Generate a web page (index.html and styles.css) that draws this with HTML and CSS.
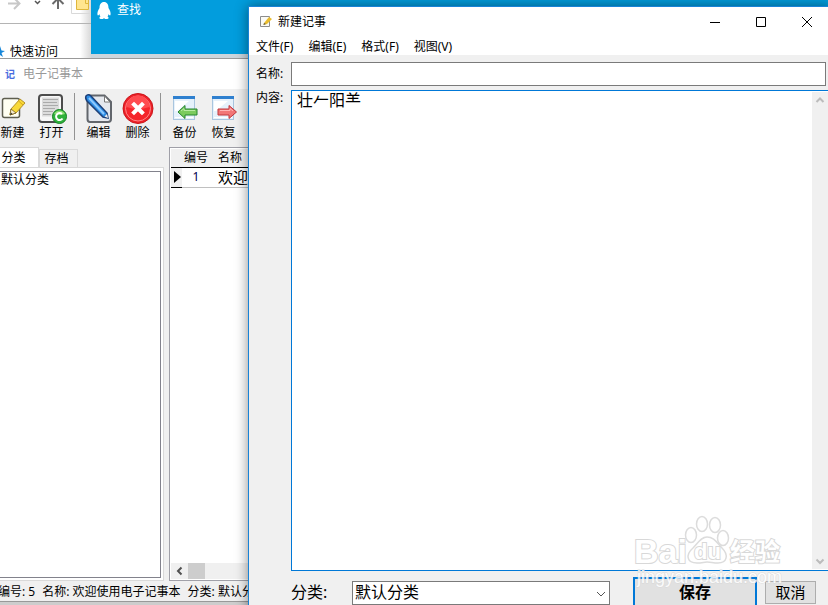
FILE: index.html
```html
<!DOCTYPE html>
<html lang="zh-CN">
<head>
<meta charset="utf-8">
<title>新建记事</title>
<link rel="stylesheet" href="styles.css">
</head>
<body>
<div class="desktop">
  <section class="explorer">
    <div class="explorer-nav">
      <svg width="90" height="23" viewBox="0 0 90 23" fill="none">
        <path d="M8 3.500H19M14 -2L19.500 3.500L14 9" stroke="#c8c8c8" stroke-width="2"/>
        <path d="M35 1L37.500 3.500L40 1" stroke="#555" stroke-width="1.500"/>
        <path d="M58 9V-2M52.500 4L58 -1.500L63.500 4" stroke="#6a6a6a" stroke-width="2"/>
        <path d="M71.500 0V13.500H90" stroke="#d9d9d9"/>
        <path d="M76.500 -1H88.500V9.500H76.500Z" fill="#ffe58f" stroke="#dfb73c"/>
        <path d="M85.500 0V3.500H88" stroke="#dfb73c"/>
      </svg>
    </div>
    <div class="quick"><svg width="10" height="12" viewBox="0 0 10 12"><path d="M-4 4.500H-1L0 0L1.500 4.500L5 5L1.500 7L3 11L0 9Z" fill="#1686d9"/></svg><span>快速访问</span></div>
  </section>

  <section class="finder">
    <svg width="14" height="18" viewBox="0 0 14 18"><path d="M7 0C4 0 2.500 2.500 2.500 6C1 8 0 11 .5 13C1 14 2 13 2.500 12C2.500 13 3 14 3.500 14.500C2 15 2 17 4 17H6L7 16L8 17H10C12 17 12 15 10.500 14.500C11 14 11.500 13 11.500 12C12 13 13 14 13.500 13C14 11 13 8 11.500 6C11.500 2.500 10 0 7 0Z" fill="#fff"/></svg>
    <span>查找</span>
  </section>

  <main class="notebook">
    <header class="notebook-title"><b>记</b><span>电子记事本</span></header>
    <nav class="toolbar">
      <button class="tool"><svg width="30" height="32" viewBox="0 0 30 32">
        <rect x="4.500" y="5.500" width="17" height="19" rx="2" fill="#fffff2" stroke="#5e5e50" stroke-width="1.500"/>
        <path d="M13 16L22 6L27 10L18 20L12 22Z" fill="#f8d936" stroke="#b3902a"/><path d="M13 16L18 20L12 22Z" fill="#f6ecd0" stroke="#776020" stroke-width=".8"/><path d="M20.500 8L25 12" stroke="#d8a520"/><path d="M12 22L14.500 21L13 19.500Z" fill="#333"/>
      </svg><span>新建</span></button>
      <button class="tool"><svg width="32" height="32" viewBox="0 0 32 32">
        <rect x="3" y="2" width="23" height="27" rx="3" fill="#f7f7f7" stroke="#4c4c4c" stroke-width="2"/>
        <rect x="6" y="4.500" width="17" height="19" fill="#dcdcdc"/><path d="M7 6.500H22M7 9.500H21M7 12.500H22M7 15.500H19M7 18.500H17M7 21.500H15" stroke="#aaa"/>
        <circle cx="23.500" cy="23.500" r="7" fill="#2fb13c" stroke="#148322"/><path d="M18 21A6 6 0 0 1 29 21Q24 23 18 21Z" fill="#8ede74"/><path d="M26 21A3.500 3.500 0 1 0 26.500 25.500" fill="none" stroke="#fff" stroke-width="2"/>
      </svg><span>打开</span></button>
      <i class="separator"></i>
      <button class="tool"><svg width="30" height="32" viewBox="0 0 30 32">
        <path d="M5 2.500H20.500L27 9V26Q27 29 24 29H6Q3.500 29 3.500 26V4Q3.500 2.500 5 2.500Z" fill="#e5e8ee" stroke="#62666c" stroke-width="2"/><path d="M20.500 3V9H26Z" fill="#fff" stroke="#777"/>
        <path d="M2 3Q4 .5 7 3L23 20L24 25L19 24L3 8Q1 5 2 3Z" fill="#2e8ee6" stroke="#1c3f78" stroke-width="1.500"/><path d="M5 5L20 21" stroke="#8fcaff" stroke-width="2"/><path d="M20.500 23.500L24 25L23 21Z" fill="#eee"/>
      </svg><span>编辑</span></button>
      <button class="tool"><svg width="32" height="32" viewBox="0 0 32 32">
        <circle cx="16" cy="15.500" r="15" fill="#ee2028" stroke="#c91519"/><circle cx="16" cy="15.500" r="12.500" fill="#f5242b" stroke="#ff8a8a"/><path d="M4.500 14A11.500 11.500 0 0 1 27.500 14Q16 18 4.500 14Z" fill="#ff4b4f"/>
        <path d="M12 11.500L20 19.500M20 11.500L12 19.500" stroke="#fff" stroke-width="4" stroke-linecap="square"/>
      </svg><span>删除</span></button>
      <i class="separator"></i>
      <button class="tool"><svg width="30" height="32" viewBox="0 0 30 32">
        <rect x="3.500" y="3.500" width="21" height="23" fill="#e6f1fb" stroke="#a9c5de"/><path d="M3 3H25V6H3Z" fill="#2f80cf"/><path d="M5 8H19L7 18H5Z" fill="#fff"/><path d="M5 24.500H23" stroke="#fff"/>
        <path d="M8 19L15 12.500V16H27V22H15V25.500Z" fill="#7ccb5e" stroke="#24842e"/><path d="M11 18L14 15.500V17.500H25" fill="none" stroke="#b9eba3"/>
      </svg><span>备份</span></button>
      <button class="tool"><svg width="30" height="32" viewBox="0 0 30 32">
        <rect x="3.500" y="3.500" width="21" height="23" fill="#e6f1fb" stroke="#a9c5de"/><path d="M3 3H25V6H3Z" fill="#2f80cf"/><path d="M5 8H19L7 18H5Z" fill="#fff"/><path d="M5 24.500H23" stroke="#fff"/>
        <path d="M27.500 19L20 12.500V16H9V22H20V25.500Z" fill="#f27676" stroke="#c0373c"/><path d="M11 17.500H21V15.500L24 18" fill="none" stroke="#ffb5b5"/>
      </svg><span>恢复</span></button>
    </nav>
    <div class="workspace">
      <div class="categories">
        <div class="tabs"><button class="tab active">分类</button><button class="tab">存档</button></div>
        <div class="tab-page"><div class="category-list">默认分类</div></div>
      </div>
      <div class="records">
        <table>
          <thead><tr><th class="mark"></th><th class="num">编号</th><th>名称</th></tr></thead>
          <tbody><tr><td class="mark"><svg width="7" height="12" viewBox="0 0 7 12"><path d="M0 0L7 6L0 12Z"/></svg></td><td class="num">1</td><td class="name">欢迎使用电子记事本</td></tr></tbody>
        </table>
        <div class="hscroll"><svg width="17" height="16" viewBox="0 0 17 16"><path d="M10.500 4.500L7 8L10.500 11.500" fill="none" stroke="#505050" stroke-width="2"/></svg><i></i></div>
      </div>
    </div>
    <footer class="status"><span>编号: 5</span><span>名称: 欢迎使用电子记事本</span><span>分类: 默认分类</span></footer>
  </main>

  <form class="dialog">
    <header class="dialog-title">
      <svg width="12" height="13" viewBox="0 0 12 13"><path d="M.5 1.500H9.500V11.500H.5Z" fill="#fafaf5" stroke="#8c8c8c"/><path d="M4 8L9 2L12 4L7 9L3.500 10Z" fill="#e9bc2d"/><path d="M3.500 10L4 8L6 9Z" fill="#555"/></svg>
      <h1>新建记事</h1>
      <div class="controls">
        <button type="button" aria-label="最小化"><svg width="10" height="10" viewBox="0 0 10 10"><path d="M0 5.500H10" stroke="#000"/></svg></button>
        <button type="button" aria-label="最大化"><svg width="10" height="10" viewBox="0 0 10 10"><path d="M.5 .5H9.500V9.500H.5Z" fill="none" stroke="#000"/></svg></button>
        <button type="button" aria-label="关闭"><svg width="10" height="10" viewBox="0 0 10 10"><path d="M0 0L10 10M10 0L0 10" stroke="#000"/></svg></button>
      </div>
    </header>
    <nav class="menu"><button type="button">文件(F)</button><button type="button">编辑(E)</button><button type="button">格式(F)</button><button type="button">视图(V)</button></nav>
    <div class="fields">
      <label for="title">名称:</label>
      <input id="title" type="text">
      <label class="top" for="content">内容:</label>
      <div class="editor">
        <textarea id="content">壮𠂉阳⺷</textarea>
        <div class="vscroll">
          <svg width="16" height="16" viewBox="0 0 16 16"><path d="M4.500 10L8 6.500L11.500 10" fill="none" stroke="#bcbcbc" stroke-width="2"/></svg>
          <svg width="16" height="16" viewBox="0 0 16 16"><path d="M4.500 6.500L8 10L11.500 6.500" fill="none" stroke="#bcbcbc" stroke-width="2"/></svg>
        </div>
      </div>
    </div>
    <footer class="actions">
      <label for="category">分类:</label>
      <div class="combo"><select id="category"><option>默认分类</option></select><svg width="10" height="6" viewBox="0 0 10 6"><path d="M1 1L5 5L9 1" fill="none" stroke="#555"/></svg></div>
      <button class="save" type="submit">保存</button>
      <button class="cancel" type="button">取消</button>
    </footer>
  </form>

  <svg class="watermark" width="160" height="75" viewBox="0 0 160 75">
    <g fill="#fff" stroke="#dcdcdc" stroke-width="1.500">
      <ellipse cx="60" cy="22" rx="5.500" ry="7.500"/>
      <ellipse cx="71" cy="11" rx="5.500" ry="7.500"/>
      <ellipse cx="84" cy="12" rx="5.500" ry="7.500"/>
      <ellipse cx="92" cy="25" rx="5.500" ry="7.500"/>
      <path d="M76 24C70 24 67 30 62 35C54 42 56 50 66 50C71 50 73 49 76 49C80 49 82 50 87 50C96 50 98 42 91 35C86 30 83 24 76 24Z"/>
    </g>
    <g class="outline"><text x="3" y="50" class="bai">Bai</text><text x="63" y="46" class="du">du</text><text x="99" y="48" class="jy">经验</text></g>
    <text x="6" y="70" class="domain">jingyan.baidu.com</text>
  </svg>
</div>
</body>
</html>
```
FILE: styles.css
```css
* { box-sizing: border-box; }
body {
  margin: 0;
  font: 12px/16px "Noto Sans", "Noto Sans CJK SC", sans-serif;
  color: #000;
}
button, input, textarea, select { font: inherit; color: inherit; margin: 0; }
button { padding: 0; border: 0; background: none; }
svg { display: block; flex: none; }
.desktop {
  position: relative;
  height: 100vh;
  overflow: hidden;
  background: #cdcdcd;
}

/* background windows */
.explorer {
  position: absolute;
  left: 0;
  top: 0;
  width: 91px;
  height: 60px;
  background: linear-gradient(90deg, #fff 88%, #d8d8d8);
}
.explorer-nav { height: 24px; border-bottom: 1px solid #b4b4b4; }
.quick { display: flex; align-items: center; padding-top: 20px; }
.finder {
  position: absolute;
  left: 91px;
  right: 0;
  top: 0;
  height: 60px;
  display: flex;
  align-items: flex-start;
  gap: 6px;
  padding: 2px 6px;
  background: #029ddd;
  border-bottom: 6px solid #ccd5dc;
  color: #fff;
}

/* notebook window */
.notebook {
  position: absolute;
  left: -8px;
  top: 58px;
  bottom: 3px;
  width: 640px;
  display: flex;
  flex-direction: column;
  background: #f0f0f0;
  border-top: 1px solid #999;
  border-bottom: 1px solid #999;
}
.notebook-title {
  display: flex;
  align-items: center;
  gap: 8px;
  height: 30px;
  padding-left: 13px;
  background: #fff;
  color: #999;
}
.notebook-title b { font-size: 10px; color: #4a6ee0; }
.toolbar { display: flex; padding: 4px 0 0 1px; height: 58px; }
.tool {
  display: flex;
  flex-direction: column;
  align-items: center;
  width: 39px;
  height: 48px;
}
.separator { width: 1px; height: 47px; margin: 0 4px 0 3px; background: #929292; }
.workspace { flex: 1; display: flex; gap: 5px; min-height: 0; }
.categories { width: 172px; display: flex; flex-direction: column; }
.tabs { display: flex; align-items: flex-end; height: 20px; }
.tab { width: 39px; height: 18px; padding-right: 4px; border: 1px solid #d9d9d9; border-bottom: 0; }
.tab.active { width: 47px; height: 20px; background: #fff; }
.tab-page { flex: 1; padding: 3px 2px 2px 0; border: 1px solid #d9d9d9; background: #fff; display: flex; }
.category-list { flex: 1; padding-left: 7px; border: 1px solid #82828c; }
.records {
  flex: 1;
  display: flex;
  flex-direction: column;
  justify-content: space-between;
  border: 1px solid #a0a0a8;
  padding: 1px;
  background: #fff;
}
table { border-collapse: collapse; width: 100%; }
th { height: 18px; padding: 0; background: #f0f0f0; font-weight: 400; text-align: left; border-bottom: 1px solid #000; }
td { height: 20px; padding: 0; border-bottom: 1px solid #c0c0c0; line-height: 18px; }
.mark { width: 11px; padding-left: 3px; }
td.mark { background: #f0f0f0; border-bottom: 1px solid #000; }
.num { width: 36px; text-align: center; }
td.num { color: #000050; padding-right: 8px; }
th.num { padding-right: 8px; }
.num { padding-left: 0; }
.name { font-size: 15px; }
.hscroll { display: flex; height: 16px; background: #f0f0f0; }
.hscroll i { width: 17px; background: #cdcdcd; }
.status { display: flex; gap: 7px; height: 20px; padding: 3px 6px; white-space: nowrap; }

/* note dialog */
.dialog {
  position: absolute;
  left: 248px;
  right: -3px;
  top: 6px;
  bottom: -8px;
  display: flex;
  flex-direction: column;
  background: #f0f0f0;
  border: 1px solid #1883d7;
  box-shadow: 0 0 12px rgba(0, 0, 0, .45);
}
.dialog-title { display: flex; align-items: center; gap: 6px; height: 29px; padding-left: 11px; background: #fff; }
h1 { margin: 0; font-size: 12px; font-weight: 400; }
.controls { margin-left: auto; display: flex; }
.controls button { width: 46px; height: 29px; display: flex; align-items: center; justify-content: center; }
.menu { display: flex; gap: 15px; height: 19px; padding-left: 7px; background: #fff; }
.menu button { height: 19px; padding-top: 2px; }
.fields {
  flex: 1;
  display: grid;
  grid-template-columns: 35px 1fr;
  grid-template-rows: 24px 1fr;
  gap: 4px 0;
  padding: 7px 2px 0 7px;
  min-height: 0;
}
.fields label { padding-top: 4px; }
.fields .top { padding-top: 0; }
.fields input { width: auto; margin-right: 2px; border: 1px solid #7a7a7a; background: #fff; outline: 0; padding: 0 4px; }
.editor { display: flex; min-height: 0; border: 1px solid #0078d7; border-right: 0; background: #fff; }
textarea {
  flex: 1;
  border: 0;
  padding: 0 5px;
  outline: 0;
  resize: none;
  overflow: hidden;
  background: #fff;
  font-size: 16px;
  line-height: 18px;
}
.vscroll { width: 16px; margin: 1px 0; display: flex; flex-direction: column; justify-content: space-between; background: #f0f0f0; }
.actions { display: flex; align-items: flex-start; height: 41px; padding: 6px 14px 0 42px; font-size: 16px; }
.actions label { width: 61px; padding-top: 7px; }
.combo { position: relative; flex: 1; margin-top: 4px; }
.combo svg { position: absolute; right: 4px; top: 10px; }
select {
  display: block;
  width: 100%;
  height: 24px;
  padding: 0 2px 3px;
  appearance: none;
  border: 1px solid #7a7a7a;
  border-radius: 0;
  background: #fff;
}
.save { width: 124px; height: 36px; margin-left: 23px; padding-bottom: 7px; border: 2px solid #0078d7; background: #e1e1e1; font-weight: 700; }
.cancel { width: 51px; height: 23px; margin: 4px 0 0 8px; padding-bottom: 2px; border: 1px solid #adadad; background: #e1e1e1; font-size: 15px; }

.watermark { position: absolute; right: 37px; bottom: 17px; pointer-events: none; }
.outline text { fill: #fff; stroke: #d8d8d8; stroke-width: 2px; paint-order: stroke; font-weight: 700; }
.bai { font: 34px "Liberation Sans", sans-serif; }
.outline .du { font: 700 22px "Liberation Sans", sans-serif; }
.jy { font: 25px "Noto Sans CJK SC", sans-serif; }
.domain { font: 18px "Liberation Sans", sans-serif; fill: #fff; stroke: #d8d8d8; stroke-width: 1px; paint-order: stroke; opacity: .85; }
```
